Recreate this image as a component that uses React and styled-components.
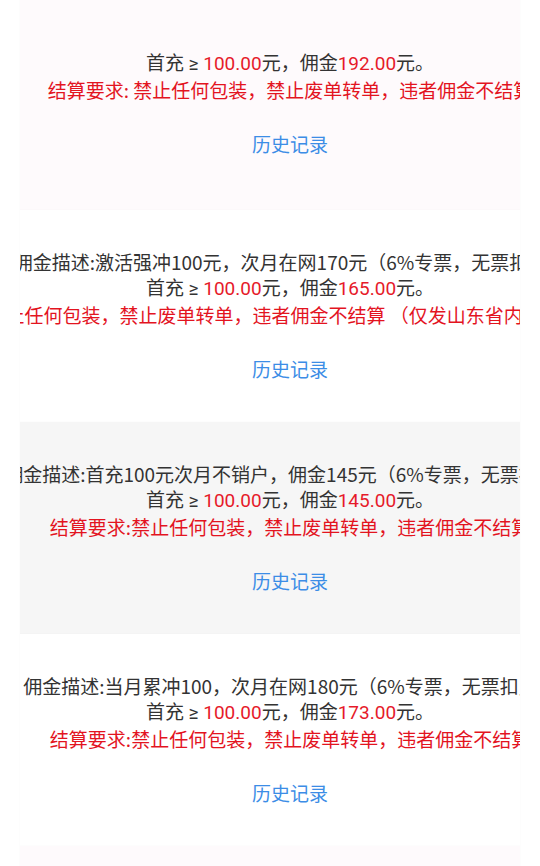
import React from "react";
import styled, { createGlobalStyle } from "styled-components";

const GlobalStyle = createGlobalStyle`
  html, body {
    margin: 0;
    padding: 0;
    background: #ffffff;
    font-family: "Noto Sans CJK SC", "Noto Sans", sans-serif;
  }
`;

const tones = {
  pink: "#fefafc",
  white: "#ffffff",
  gray: "#f6f6f6",
};

const List = styled.div`
  display: flex;
  flex-direction: column;
  padding: 0 20px;
  margin-top: -2px;
`;

const Card = styled.div`
  height: 212px;
  overflow: hidden;
  background: ${(p) => tones[p.$tone]};
  box-shadow: 0 0 1px rgba(0, 0, 0, 0.05);
`;

// content column is shifted 20px right, the card clips what runs over
const Body = styled.div`
  width: 500px;
  height: 100%;
  margin-left: 20px;
  display: flex;
  flex-direction: column;
  align-items: center;
  justify-content: center;
`;

const Line = styled.div`
  white-space: nowrap;
  font-size: 19px;
  line-height: 26.5px;
  color: ${(p) => (p.$red ? "#e3141f" : "#333333")};
`;

const Title = styled(Line)`
  font-family: Roboto, "Noto Sans CJK SC", sans-serif;
`;

const Money = styled.span`
  color: #e61a2a;
`;

const HistoryLink = styled.a`
  margin-top: 27.5px;
  font-size: 19px;
  line-height: 26.5px;
  color: #3c8de6;
  text-decoration: none;
  cursor: pointer;
`;

const items = [
  {
    tone: "pink",
    desc: null,
    charge: "100.00",
    fee: "192.00",
    rule: "结算要求: 禁止任何包装，禁止废单转单，违者佣金不结算",
  },
  {
    tone: "white",
    desc: "佣金描述:激活强冲100元，次月在网170元（6%专票，无票扣点）",
    charge: "100.00",
    fee: "165.00",
    rule: "结算要求:禁止任何包装，禁止废单转单，违者佣金不结算 （仅发山东省内，省外不予结算）",
  },
  {
    tone: "gray",
    desc: "佣金描述:首充100元次月不销户，佣金145元（6%专票，无票扣点）",
    charge: "100.00",
    fee: "145.00",
    rule: "结算要求:禁止任何包装，禁止废单转单，违者佣金不结算",
  },
  {
    tone: "white",
    desc: "佣金描述:当月累冲100，次月在网180元（6%专票，无票扣点）",
    charge: "100.00",
    fee: "173.00",
    rule: "结算要求:禁止任何包装，禁止废单转单，违者佣金不结算",
  },
  {
    tone: "pink",
    desc: null,
    charge: "100.00",
    fee: "160.00",
    rule: "结算要求: 禁止任何包装，禁止废单转单，违者佣金不结算",
  },
];

function CommissionCard({ tone, desc, charge, fee, rule }) {
  return (
    <Card $tone={tone}>
      <Body>
        {desc ? <Line>{desc}</Line> : null}
        <Title>
          首充 ≥ <Money>{charge}</Money>元，佣金<Money>{fee}</Money>元。
        </Title>
        <Line $red>{rule}</Line>
        <HistoryLink>历史记录</HistoryLink>
      </Body>
    </Card>
  );
}

export default function App() {
  return (
    <>
      <GlobalStyle />
      <List>
        {items.map((item, i) => (
          <CommissionCard key={i} {...item} />
        ))}
      </List>
    </>
  );
}
